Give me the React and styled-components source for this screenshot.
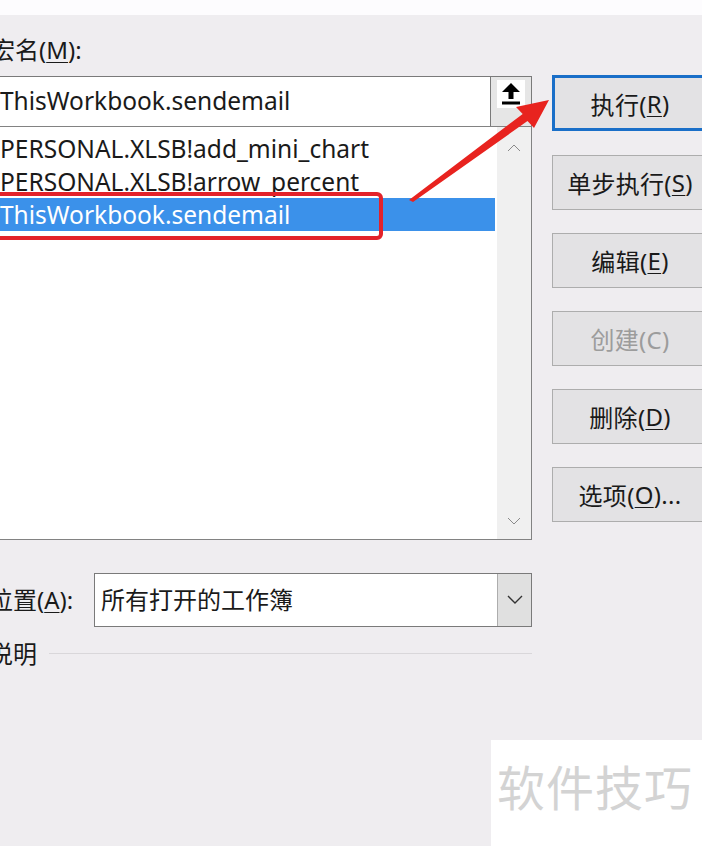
import React from 'react'
import styled, { createGlobalStyle } from 'styled-components'

const GlobalStyle = createGlobalStyle`
  html, body {
    margin: 0;
    padding: 0;
    background: #efedf0;
  }
  body {
    font-family: "Noto Sans", "Noto Sans CJK SC", sans-serif;
    color: #1a1a1a;
  }
`

const Page = styled.div`
  position: relative;
  width: 702px;
  height: 846px;
  overflow: hidden;
  background: #efedf0;
`

const TopStrip = styled.div`
  height: 15px;
  background: #fdfcfe;
`

const Main = styled.div`
  display: flex;
  gap: 20px;
  margin-left: -5px;
`

const LeftColumn = styled.div`
  width: 537px;
  flex-shrink: 0;
  display: flex;
  flex-direction: column;
`

const RightColumn = styled.div`
  width: 156px;
  flex-shrink: 0;
  display: flex;
  flex-direction: column;
  padding-top: 60px;
`

const Label = styled.div`
  font-size: 24px;
  line-height: 30px;
  margin-left: ${p => p.$indent || 0}px;
  white-space: nowrap;
`

const Key = styled.span`
  text-decoration: underline;
  text-underline-offset: 3px;
  text-decoration-thickness: 1px;
`

const InputRow = styled.div`
  display: flex;
  height: 51px;
  margin-top: 11px;
`

const InputField = styled.div`
  flex: 1;
  background: #ffffff;
  border: 1px solid #7a7a7a;
  border-right: none;
  padding-left: 4px;
  font-size: 24.5px;
  line-height: 47px;
  white-space: nowrap;
`

const UpButton = styled.div`
  width: 42px;
  flex-shrink: 0;
  background: #e6e6e6;
  border: 1px solid #7a7a7a;
  display: flex;
  align-items: flex-start;
  justify-content: center;
  padding-top: 3px;
  box-sizing: border-box;
`

const UpFace = styled.div`
  width: 28px;
  height: 28px;
  background: #ffffff;
  display: flex;
  align-items: center;
  justify-content: center;
`

const ListBox = styled.div`
  height: 414px;
  margin-top: -1px;
  border: 1px solid #828282;
  background: #ffffff;
  display: flex;
  box-sizing: border-box;
`

const Items = styled.div`
  flex: 1;
  padding-top: 5px;
`

const Item = styled.div`
  height: 33px;
  line-height: 33px;
  font-size: 24.5px;
  padding-left: 4px;
  white-space: nowrap;
  background: ${p => (p.$selected ? '#3b91ea' : 'transparent')};
  color: ${p => (p.$selected ? '#ffffff' : '#1a1a1a')};
  margin-right: 2px;
`

const ScrollBar = styled.div`
  width: 34px;
  background: #f0f0f0;
  display: flex;
  flex-direction: column;
  justify-content: space-between;
  align-items: center;
  padding: 17px 0 14px;
`

const BottomRow = styled.div`
  display: flex;
  align-items: center;
  margin-top: 33px;
  height: 54px;
`

const ComboLabel = styled(Label)`
  width: 105px;
  flex-shrink: 0;
`

const Combo = styled.div`
  flex: 1;
  display: flex;
  height: 54px;
  background: #ffffff;
  border: 1px solid #7a7a7a;
  box-sizing: border-box;
`

const ComboText = styled.div`
  flex: 1;
  font-size: 24px;
  line-height: 52px;
  padding-left: 6px;
`

const ComboButton = styled.div`
  width: 33px;
  background: #e0e0e0;
  border-left: 1px solid #adadad;
  display: flex;
  align-items: center;
  justify-content: center;
`

const DescRow = styled.div`
  display: flex;
  align-items: center;
  gap: 12px;
  margin-top: 12px;
`

const Rule = styled.div`
  flex: 1;
  height: 1px;
  background: #d9d7da;
  margin-top: -2px;
`

const DialogButton = styled.div`
  height: ${p => (p.$default ? 56 : 55)}px;
  margin-bottom: ${p => (p.$default ? 24 : 23)}px;
  box-sizing: border-box;
  border: ${p => (p.$default ? '3px solid #1a6fc8' : '1px solid #adadad')};
  background: #e3e2e4;
  display: flex;
  align-items: center;
  justify-content: center;
  font-size: 24px;
  letter-spacing: 0.3px;
  color: ${p => (p.$disabled ? '#9c9c9c' : '#1a1a1a')};
  white-space: nowrap;
`

const WatermarkRow = styled.div`
  display: flex;
  justify-content: flex-end;
  margin-top: 71px;
`

const Watermark = styled.div`
  width: 211px;
  height: 120px;
  background: #ffffff;
  padding: 14px 0 0 6px;
  box-sizing: border-box;
  font-family: "Noto Sans CJK SC", sans-serif;
  font-size: 48px;
  line-height: 62px;
  color: #d3d3d3;
  letter-spacing: 1px;
`

const Highlight = styled.div`
  position: absolute;
  left: -10px;
  top: 192px;
  width: 393px;
  height: 48px;
  box-sizing: border-box;
  border: 4px solid #e3222a;
  border-radius: 6px;
`

const Overlay = styled.svg`
  position: absolute;
  left: 0;
  top: 0;
  pointer-events: none;
`

const Chevron = ({ down }) => (
  <svg width="14" height="8" viewBox="0 0 14 8">
    <polyline
      points={down ? '1,1 7,7 13,1' : '1,7 7,1 13,7'}
      fill="none"
      stroke="#8a8a8a"
      strokeWidth="1"
    />
  </svg>
)

const UpArrow = () => (
  <svg width="20" height="24" viewBox="0 0 20 24">
    <polygon points="10,1 19,10 12.5,10 12.5,17 7.5,17 7.5,10 1,10" fill="#000" />
    <rect x="1" y="19.5" width="18" height="3" fill="#000" />
  </svg>
)

const buttons = [
  { label: '执行', key: 'R', def: true },
  { label: '单步执行', key: 'S' },
  { label: '编辑', key: 'E' },
  { label: '创建', key: 'C', disabled: true },
  { label: '删除', key: 'D' },
  { label: '选项', key: 'O', tail: '...' },
]

const macros = [
  'PERSONAL.XLSB!add_mini_chart',
  'PERSONAL.XLSB!arrow_percent',
  'ThisWorkbook.sendemail',
]

export default function App() {
  return (
    <Page>
      <GlobalStyle />
      <TopStrip />
      <Main>
        <LeftColumn>
          <Label $indent={-4} style={{ marginTop: 20 }}>
            宏名(<Key>M</Key>):
          </Label>
          <InputRow>
            <InputField>ThisWorkbook.sendemail</InputField>
            <UpButton>
              <UpFace>
                <UpArrow />
              </UpFace>
            </UpButton>
          </InputRow>
          <ListBox>
            <Items>
              {macros.map((m, i) => (
                <Item key={m} $selected={i === 2}>
                  {m}
                </Item>
              ))}
            </Items>
            <ScrollBar>
              <Chevron />
              <Chevron down />
            </ScrollBar>
          </ListBox>
          <BottomRow>
            <ComboLabel $indent={-6}>
              位置(<Key>A</Key>):
            </ComboLabel>
            <Combo>
              <ComboText>所有打开的工作簿</ComboText>
              <ComboButton>
                <svg width="16" height="10" viewBox="0 0 16 10">
                  <polyline points="1,1 8,8 15,1" fill="none" stroke="#333" strokeWidth="1.4" />
                </svg>
              </ComboButton>
            </Combo>
          </BottomRow>
          <DescRow>
            <Label $indent={-6}>说明</Label>
            <Rule />
          </DescRow>
        </LeftColumn>
        <RightColumn>
          {buttons.map(b => (
            <DialogButton key={b.key} $default={b.def} $disabled={b.disabled}>
              {b.label}(
              {b.disabled ? b.key : <Key>{b.key}</Key>}){b.tail}
            </DialogButton>
          ))}
        </RightColumn>
      </Main>
      <WatermarkRow>
        <Watermark>软件技巧</Watermark>
      </WatermarkRow>
      <Highlight />
      <Overlay width="702" height="846" viewBox="0 0 702 846">
        <polygon
          points="409,200 522.7,114 516,107 549,100 534,128 527.5,121 413,202"
          fill="#e8231f"
        />
      </Overlay>
    </Page>
  )
}
